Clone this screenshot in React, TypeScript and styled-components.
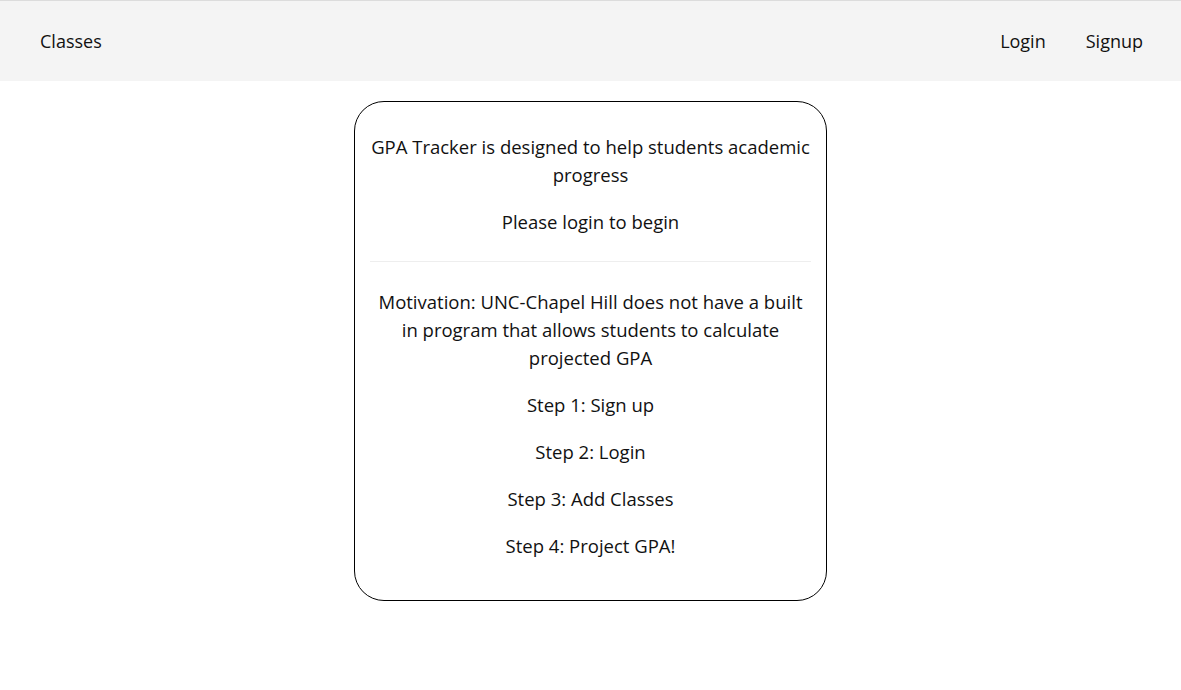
import styled, { createGlobalStyle } from "styled-components";

const GlobalStyle = createGlobalStyle`
  html, body {
    margin: 0;
    padding: 0;
    background: #fff;
    font-family: "Open Sans", "Liberation Sans", sans-serif;
    color: #111;
  }
`;

const NavBar = styled.nav`
  display: flex;
  align-items: center;
  height: 80px;
  padding: 0 18px 0 20px;
  background: #f4f4f4;
  border-top: 1px solid #dcdcdc;
`;

const NavItem = styled.a<{ $push?: boolean }>`
  padding: 0 20px;
  font-size: 18px;
  color: #111;
  text-decoration: none;
  margin-left: ${(p) => (p.$push ? "auto" : "0")};
`;

const Main = styled.main`
  display: flex;
  justify-content: center;
  padding-top: 20px;
`;

const Card = styled.section`
  box-sizing: border-box;
  width: 473px;
  height: 500px;
  padding: 12px 15px;
  border: 1px solid #000;
  border-radius: 30px;
  text-align: center;
`;

const Text = styled.p`
  margin: 19px 0;
  font-size: 18.5px;
  line-height: 28px;
`;

const Divider = styled.hr`
  margin: 25px 0 26px;
  border: 0;
  border-top: 1px solid #eee;
`;

const steps = ["Step 1: Sign up", "Step 2: Login", "Step 3: Add Classes", "Step 4: Project GPA!"];

export default function App() {
  return (
    <>
      <GlobalStyle />
      <NavBar>
        <NavItem href="#">Classes</NavItem>
        <NavItem href="#" $push>
          Login
        </NavItem>
        <NavItem href="#">Signup</NavItem>
      </NavBar>
      <Main>
        <Card>
          <Text>GPA Tracker is designed to help students academic progress</Text>
          <Text>Please login to begin</Text>
          <Divider />
          <Text>
            Motivation: UNC-Chapel Hill does not have a built in program that allows students to calculate
            projected GPA
          </Text>
          {steps.map((s) => (
            <Text key={s}>{s}</Text>
          ))}
        </Card>
      </Main>
    </>
  );
}
